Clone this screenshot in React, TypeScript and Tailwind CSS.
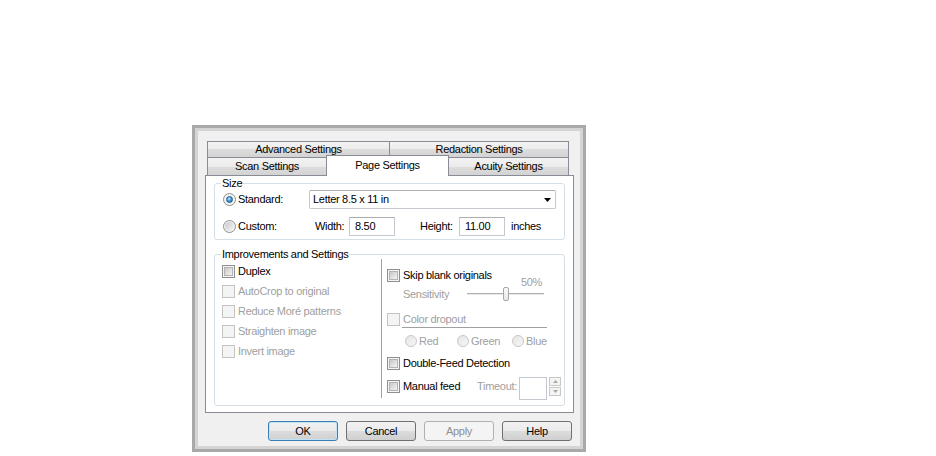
import React from "react";

function Checkbox({ disabled }: { disabled?: boolean }) {
  if (disabled)
    return <div className="w-[13px] h-[13px] shrink-0 border border-[#c4c4c4] bg-[#f4f4f4]" />;
  return (
    <div className="w-[13px] h-[13px] shrink-0 border border-[#8e8f8f] bg-[#f4f4f4] p-[1px]">
      <div className="w-full h-full border border-[#b4b4b4] bg-gradient-to-br from-[#c8c8c8] to-[#f4f4f4]" />
    </div>
  );
}

function CheckRow({ label, disabled, className }: { label: string; disabled?: boolean; className?: string }) {
  return (
    <div className={"flex items-center gap-[3px] " + (className ?? "")}>
      <Checkbox disabled={disabled} />
      <span className={disabled ? "text-[#a0a0a0]" : "text-black"}>{label}</span>
    </div>
  );
}

function Radio({ checked }: { checked?: boolean }) {
  return (
    <div className="w-[13px] h-[13px] shrink-0 rounded-full border border-[#8e8f8f] bg-[#f4f4f4] flex items-center justify-center">
      {checked ? (
        <div className="w-[7px] h-[7px] rounded-full border border-[#1c5a8e] bg-[radial-gradient(circle_at_40%_35%,#bfe6fb,#3e92d4_55%,#175a94)]" />
      ) : (
        <div className="w-[9px] h-[9px] rounded-full bg-gradient-to-br from-[#cacaca] to-[#f6f6f6]" />
      )}
    </div>
  );
}

function DisabledRadio({ label, className }: { label: string; className?: string }) {
  return (
    <div className={"flex items-center gap-[2px] " + (className ?? "")}>
      <div className="w-[12px] h-[12px] shrink-0 rounded-full border border-[#c8c8c8] bg-gradient-to-br from-[#e6e6e6] to-[#f7f7f7]" />
      <span className="text-[#a0a0a0]">{label}</span>
    </div>
  );
}

function Tab({ className, children }: { className: string; children: React.ReactNode }) {
  return (
    <div
      className={
        "flex items-center justify-center border-t border-x border-[#898c95] bg-[linear-gradient(#f3f3f3,#ebebeb_50%,#dddddd_50%,#d3d3d3)] " +
        className
      }
    >
      {children}
    </div>
  );
}

function Button({ children, focused, disabled }: { children: React.ReactNode; focused?: boolean; disabled?: boolean }) {
  if (disabled)
    return (
      <div className="w-[70px] h-[20px] rounded-[3px] border border-[#adb2b5] bg-[#f4f4f4] flex items-center justify-center text-[#8f8f8f]">
        {children}
      </div>
    );
  return (
    <div
      className={
        "w-[70px] h-[20px] rounded-[3px] border flex items-center justify-center text-black bg-[linear-gradient(#f2f2f2,#ebebeb_50%,#dddddd_50%,#cfcfcf)] " +
        (focused ? "border-[#3c7fb1] shadow-[inset_0_0_0_1px_#bfe3f7]" : "border-[#707070]")
      }
    >
      {children}
    </div>
  );
}

export default function App() {
  return (
    <div className="w-[936px] h-[456px] bg-white pl-[192px] pt-[125px] font-['Liberation_Sans',Arial,sans-serif] text-[11px] leading-[13px] tracking-[-0.3px] text-black">
      <div className="w-[394px] h-[327px] border-[3px] border-[#a9a9a9]">
        <div className="w-full h-full border-[3px] border-[#d4d4d4] bg-[#f0f0f0] flex flex-col pt-[10px]">
          {/* Tabs */}
          <div className="ml-[9px] w-[362px] flex flex-col">
            <div className="flex h-[16px]">
              <Tab className="w-[183px]">Advanced Settings</Tab>
              <Tab className="w-[180px] -ml-[1px]">Redaction Settings</Tab>
            </div>
            <div className="flex h-[18px] items-end">
              <Tab className="w-[120px] h-[18px]">Scan Settings</Tab>
              <div className="relative z-10 w-[123px] h-[21px] -mb-[1px] -ml-[1px] border-t border-x border-[#898c95] bg-white flex items-center justify-center pb-[1px]">
                Page Settings
              </div>
              <Tab className="w-[121px] h-[18px] -ml-[1px]">Acuity Settings</Tab>
            </div>
          </div>

          {/* Panel */}
          <div className="ml-[7px] w-[369px] h-[238px] border border-[#898c95] bg-white px-[8px] flex flex-col">
            {/* Size */}
            <fieldset className="h-[64px] border border-[#d5dfe5] rounded-[3px] flex flex-col">
              <legend className="ml-[6px] px-[1px] leading-[14px]">Size</legend>
              <div className="flex items-center h-[19px] pl-[8px]">
                <div className="w-[86px] flex items-center gap-[2px]">
                  <Radio checked />
                  <span>Standard:</span>
                </div>
                <div className="w-[247px] h-[19px] border border-[#c5c9cf] border-t-[#abadb3] rounded-[2px] bg-white flex items-center justify-between pl-[3px] pr-[4px]">
                  <span>Letter 8.5 x 11 in</span>
                  <svg width="7" height="4" viewBox="0 0 7 4">
                    <path d="M0 0h7L3.5 4z" fill="#000" />
                  </svg>
                </div>
              </div>
              <div className="flex items-center h-[19px] mt-[8px] pl-[8px]">
                <div className="w-[92px] flex items-center gap-[2px]">
                  <Radio />
                  <span>Custom:</span>
                </div>
                <span className="w-[34px]">Width:</span>
                <div className="w-[46px] h-[19px] border border-[#c5c9cf] border-t-[#abadb3] bg-white flex items-center pl-[5px]">
                  8.50
                </div>
                <span className="ml-[25px] w-[39px]">Height:</span>
                <div className="w-[46px] h-[19px] border border-[#c5c9cf] border-t-[#abadb3] bg-white flex items-center pl-[5px]">
                  11.00
                </div>
                <span className="ml-[6px]">inches</span>
              </div>
            </fieldset>

            {/* Improvements */}
            <fieldset className="mt-[7px] h-[159px] border border-[#d5dfe5] rounded-[3px]">
              <legend className="ml-[6px] px-[1px] leading-[14px]">Improvements and Settings</legend>
              <div className="flex">
                <div className="w-[166px] pl-[7px] flex flex-col">
                  <CheckRow label="Duplex" className="h-[20px]" />
                  <CheckRow label="AutoCrop to original" disabled className="h-[20px]" />
                  <CheckRow label="Reduce Moré patterns" disabled className="h-[20px]" />
                  <CheckRow label="Straighten image" disabled className="h-[20px]" />
                  <CheckRow label="Invert image" disabled className="h-[20px]" />
                </div>
                <div className="w-[1px] h-[139px] -mt-[2px] bg-[#a0a0a0]" />
                <div className="flex flex-col pl-[5px]">
                  <CheckRow label="Skip blank originals" className="mt-[8px] h-[13px]" />
                  <div className="-mt-[5px] h-[10px] leading-[10px] w-[155px] text-right text-[#a0a0a0]">50%</div>
                  <div className="h-[14px] flex items-center pl-[16px]">
                    <span className="w-[64px] text-[#a0a0a0]">Sensitivity</span>
                    <div className="relative w-[77px] h-[14px] flex items-center">
                      <div className="w-full h-[2px] border-t border-[#b0b0b0] bg-[#e8e8e8]" />
                      <div className="absolute left-[36px] top-0 w-[6px] h-[14px] rounded-[2px] border border-[#a8a8a8] bg-gradient-to-b from-[#fbfbfb] to-[#e6e6e6]" />
                    </div>
                  </div>
                  <CheckRow label="Color dropout" disabled className="mt-[12px] h-[13px]" />
                  <div className="mt-[1px] ml-[15px] w-[145px] h-[1px] bg-[#a0a0a0]" />
                  <div className="mt-[7px] h-[12px] flex items-center pl-[18px]">
                    <DisabledRadio label="Red" className="w-[52px]" />
                    <DisabledRadio label="Green" className="w-[55px]" />
                    <DisabledRadio label="Blue" />
                  </div>
                  <CheckRow label="Double-Feed Detection" className="mt-[10px] h-[13px]" />
                  <div className="mt-[7px] h-[23px] flex items-start">
                    <CheckRow label="Manual feed" className="w-[90px] h-[13px] mt-[3px]" />
                    <span className="w-[42px] h-[13px] mt-[3px] text-[#a0a0a0]">Timeout:</span>
                    <div className="w-[28px] h-[23px] border border-[#c5c9cf] bg-white" />
                    <div className="ml-[2px] w-[12px] flex flex-col gap-[1px]">
                      <div className="h-[9px] border border-[#c8c8c8] bg-[#f4f4f4] flex items-center justify-center">
                        <svg width="5" height="3" viewBox="0 0 5 3">
                          <path d="M0 3h5L2.5 0z" fill="#a8a8a8" />
                        </svg>
                      </div>
                      <div className="h-[9px] border border-[#c8c8c8] bg-[#f4f4f4] flex items-center justify-center">
                        <svg width="5" height="3" viewBox="0 0 5 3">
                          <path d="M0 0h5L2.5 3z" fill="#a8a8a8" />
                        </svg>
                      </div>
                    </div>
                  </div>
                </div>
              </div>
            </fieldset>
          </div>

          {/* Buttons */}
          <div className="mt-[8px] flex justify-end gap-[8px] pr-[8px]">
            <Button focused>OK</Button>
            <Button>Cancel</Button>
            <Button disabled>Apply</Button>
            <Button>Help</Button>
          </div>
        </div>
      </div>
    </div>
  );
}
